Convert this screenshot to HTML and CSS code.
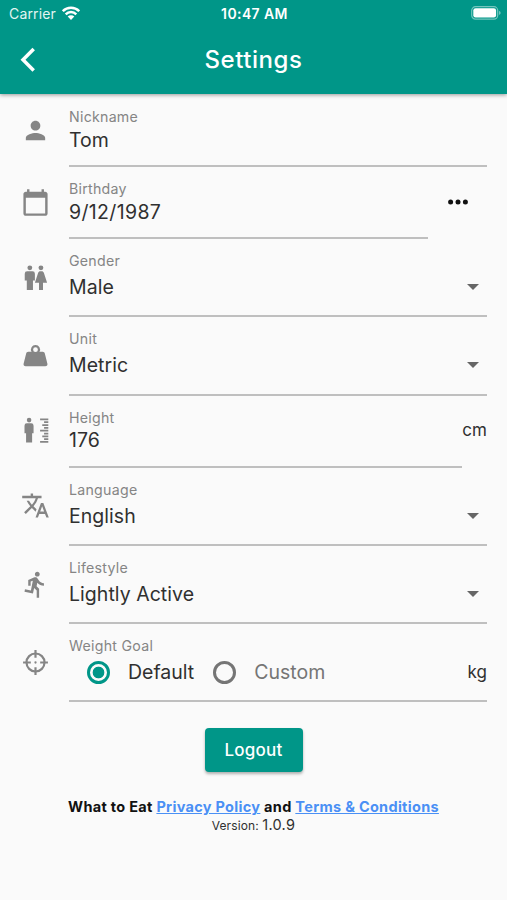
FILE: index.html
```html
<!DOCTYPE html>
<html lang="en">
<head>
<meta charset="utf-8">
<title>Settings</title>
<link rel="stylesheet" href="styles.css">
</head>
<body>
<header class="header">
  <div class="status">
    <div class="carrier"><span>Carrier</span>
      <svg class="wifi" viewBox="0 0 18 14"><g fill="none" stroke="currentColor" stroke-width="2.5"><path d="M.8 5.200a11.600 11.600 0 0 1 16.400 0"/><path d="M3.700 8.300a7.500 7.500 0 0 1 10.600 0"/></g><path d="M9 14 5.700 10.600a4.700 4.700 0 0 1 6.600 0z" fill="currentColor"/></svg>
    </div>
    <div class="clock">10:47 AM</div>
    <div class="power"><svg class="battery" viewBox="0 0 30 14"><rect x=".7" y=".7" width="26" height="12.400" rx="3.800" fill="none" stroke="#fff" stroke-opacity=".45" stroke-width="1.200"/><rect x="2.300" y="2.300" width="22.800" height="9.200" rx="2.300" fill="#fff"/><path d="M28.100 4.800q3 2.100 0 4.200z" fill="#fff" fill-opacity=".5"/></svg></div>
  </div>
  <div class="bar">
    <svg class="back" viewBox="0 0 16 26"><path d="M13.700 2 3 12.800 13.700 23.600" fill="none" stroke="currentColor" stroke-width="3.500"/></svg>
    <h1 class="title">Settings</h1>
    <span></span>
  </div>
</header>
<main class="list">
  <section class="row">
    <div class="lead"><svg class="icon" viewBox="0 0 24 24"><path d="M12 12c2.210 0 4-1.790 4-4s-1.790-4-4-4-4 1.790-4 4 1.790 4 4 4zm0 2c-2.670 0-8 1.340-8 4v2h16v-2c0-2.660-5.330-4-8-4z"/></svg></div>
    <div class="field"><label class="label">Nickname</label><div class="value">Tom</div></div>
  </section>
  <section class="row">
    <div class="lead"><svg class="icon" viewBox="0 0 24 24"><path d="M20 3h-1V1h-2v2H7V1H5v2H4c-1.100 0-2 .9-2 2v16c0 1.100.9 2 2 2h16c1.100 0 2-.9 2-2V5c0-1.100-.9-2-2-2zm0 18H4V8h16z"/></svg></div>
    <div class="field"><label class="label">Birthday</label><div class="value date">9/12/1987</div></div>
    <div class="more"><svg class="dots" viewBox="0 0 20 6"><circle cx="2.600" cy="3" r="2.500"/><circle cx="10" cy="3" r="2.500"/><circle cx="17.400" cy="3" r="2.500"/></svg></div>
  </section>
  <section class="row tall">
    <div class="lead"><svg class="icon low" viewBox="0 0 24 24"><circle cx="7.300" cy="3.200" r="2"/><circle cx="16.500" cy="3.200" r="2"/><path d="M5.100 6h4.400a2 2 0 0 1 2 2v5.600h-1.600v7.900H4.800v-7.900H3.100V8a2 2 0 0 1 2-2zM15.900 6h1.300c.8 0 1.400.5 1.700 1.300l2.700 8.200h-3.400v6h-3.300v-6h-3.400l2.700-8.200c.3-.8.900-1.300 1.700-1.300z"/></svg></div>
    <div class="field"><label class="label">Gender</label><div class="value">Male<i class="caret"></i></div></div>
  </section>
  <section class="row tall">
    <div class="lead"><svg class="icon low" viewBox="-2 -2 28 28"><path fill-rule="evenodd" d="M12 1a4.300 4.300 0 0 1 3.800 6.500H19c1 0 1.800.7 2 1.600l2.500 10c.3 1.200-.5 2.400-2 2.400h-19C1 21.500.2 20.300.5 19.100L3 9.100C3.200 8.200 4 7.500 5 7.500h3.200A4.300 4.300 0 0 1 12 1zm0 2.100a2.300 2.300 0 1 0 0 4.600 2.300 2.300 0 0 0 0-4.600z"/></svg></div>
    <div class="field"><label class="label">Unit</label><div class="value">Metric<i class="caret"></i></div></div>
  </section>
  <section class="row">
    <div class="lead"><svg class="icon" viewBox="0 0 24 24"><circle cx="6.700" cy="3.400" r="1.900"/><path d="M5 6h3.400a2 2 0 0 1 2 2v6.300H9.200V22h-5v-7.700H2.900V8A2 2 0 0 1 5 6z"/><path d="M15.800 2.800h6.800M19.100 5.100h3.500M17.600 7.500h5M19.100 9.800h3.500M15.800 12.200h6.800M19.100 14.500h3.500M17.600 16.900h5M19.100 19.200h3.500M15.800 21.400h6.800" fill="none" stroke="currentColor" stroke-width="1.450"/></svg></div>
    <div class="field"><label class="label">Height</label><div class="value">176</div></div>
    <div class="unit">cm</div>
  </section>
  <section class="row tall">
    <div class="lead"><svg class="icon" viewBox="0 0 24 24"><path d="M12.870 15.070l-2.540-2.510.03-.03c1.740-1.940 2.980-4.170 3.710-6.530H17V4h-7V2H8v2H1v1.990h11.170C11.500 7.920 10.440 9.750 9 11.350 8.070 10.320 7.300 9.190 6.690 8h-2c.73 1.630 1.730 3.170 2.980 4.560l-5.090 5.020L4 19l5-5 3.110 3.110.76-2.040zM18.500 10h-2L12 22h2l1.120-3h4.750L21 22h2l-4.500-12zm-2.620 7l1.620-4.330L19.120 17h-3.240z"/></svg></div>
    <div class="field"><label class="label">Language</label><div class="value">English<i class="caret"></i></div></div>
  </section>
  <section class="row tall">
    <div class="lead"><svg class="icon" viewBox="0 0 24 24"><path d="M13.490 5.480c1.100 0 2-.9 2-2s-.9-2-2-2-2 .9-2 2 .9 2 2 2zm-3.600 13.900l1-4.400 2.100 2v6h2v-7.500l-2.100-2 .6-3c1.300 1.500 3.300 2.500 5.500 2.500v-2c-1.900 0-3.500-1-4.300-2.400l-1-1.600c-.4-.6-1-1-1.700-1-.3 0-.5.1-.8.1l-5.200 2.200v4.700h2v-3.400l1.800-.7-1.600 8.100-4.900-1-.4 2z"/></svg></div>
    <div class="field"><label class="label">Lifestyle</label><div class="value">Lightly Active<i class="caret"></i></div></div>
  </section>
  <section class="row tall">
    <div class="lead"><svg class="icon" viewBox="-2 -2 28 28"><g fill="none" stroke="currentColor" stroke-width="2.100"><circle cx="12" cy="12" r="8.700"/><path d="M12 0v7.500M12 16.500V24M0 12h7.500M16.500 12H24"/></g><circle cx="12" cy="12" r="1.100"/></svg></div>
    <div class="field"><label class="label">Weight Goal</label>
      <div class="value goals"><i class="radio on"></i><span class="opt">Default</span><i class="radio"></i><span class="opt muted">Custom</span><span class="kg">kg</span></div></div>
  </section>
</main>
<div class="actions"><button class="logout">Logout</button></div>
<footer class="footer">
  <div class="legal">What to Eat <a class="link">Privacy Policy</a> and <a class="link">Terms &amp; Conditions</a></div>
  <div class="version">Version: <span class="number">1.0.9</span></div>
</footer>
</body>
</html>
```
FILE: styles.css
```css
* { box-sizing: border-box; }
body {
  margin: 0;
  min-height: 900px;
  background: #fafafa;
  color: #303030;
  font-family: Inter, "Liberation Sans", sans-serif;
}
svg { display: block; }
.header {
  height: 94px;
  background: #009688;
  color: #fff;
  box-shadow: 0 1px 4px rgba(0, 0, 0, .4);
}
.status {
  display: grid;
  grid-template-columns: 1fr auto 1fr;
  height: 27px;
  padding: 0 6px 0 9px;
  align-items: center;
  font-size: 14px;
}
.carrier { display: flex; align-items: center; gap: 6px; color: #e2f5f2; letter-spacing: .15px; }
.wifi { width: 18px; height: 14px; margin-top: -2px; color: #fff; }
.clock { font-weight: 600; font-size: 14px; letter-spacing: .4px; margin-left: -1px; }
.power { display: flex; justify-content: flex-end; }
.battery { width: 30px; height: 14px; margin-top: -1px; }
.bar {
  display: grid;
  grid-template-columns: 1fr auto 1fr;
  align-items: center;
  height: 66px;
  padding: 0 19px;
}
.back { width: 16px; height: 26px; margin-left: 1px; }
.title { margin: 0; font-size: 24px; font-weight: 500; line-height: 30px; letter-spacing: .55px; }
.list { padding: 1px 20px 0 0; }
.row { display: flex; height: 72px; }
.tall { height: 78.300px; }
.lead { width: 69px; display: flex; align-items: center; padding: 0 0 2px 20.500px; }
.icon { width: 29px; height: 29px; fill: #858585; color: #858585; }
.low { margin-top: 2px; }
.field {
  flex: 1;
  display: flex;
  flex-direction: column;
  padding-top: 13px;
  border-bottom: 2px solid #bfbfbf;
}
.label { font-size: 14.200px; line-height: 18px; letter-spacing: .25px; color: #858585; }
.value {
  display: flex;
  align-items: center;
  padding-top: .6px;
  font-size: 19.500px;
  line-height: 26px;
  letter-spacing: .04px;
}
.date { letter-spacing: .35px; }
.tall .value { padding-top: 4px; }
.caret {
  margin: 0 8px 0 auto;
  border: 6px solid transparent;
  border-top-color: #666;
  border-bottom: 0;
}
.more { width: 59px; display: flex; align-items: center; justify-content: center; padding-bottom: 2px; }
.dots { width: 20px; height: 6px; fill: #111; }
.unit { width: 25px; text-align: right; font-size: 17px; line-height: 69px; letter-spacing: .1px; }
.radio {
  width: 23px;
  height: 23px;
  border: 3px solid #757575;
  border-radius: 50%;
}
.on {
  margin-left: 18px;
  border-color: #009688;
  background: radial-gradient(circle, #009688 5.500px, transparent 6.200px);
}
.opt { margin: 0 19px 0 18px; letter-spacing: 0; }
.muted { color: #757575; }
.kg { margin-left: auto; font-size: 17px; }
.goals .muted { margin-right: 0; }
.actions { display: flex; justify-content: center; padding-top: 26px; }
.logout {
  width: 98px;
  height: 44px;
  border: 0;
  border-radius: 4px;
  background: #009688;
  color: #fff;
  font: 500 17px Inter, sans-serif;
  letter-spacing: .2px;
  box-shadow: 0 2px 3px rgba(0, 0, 0, .3);
}
.footer { padding-top: 26px; text-align: center; }
.legal { font-size: 14.500px; line-height: 18px; font-weight: 700; color: #111; letter-spacing: .3px; }
.link { color: #4a90f5; text-decoration: underline; }
.version { font-size: 12px; line-height: 17px; letter-spacing: .1px; }
.number { font-size: 14.500px; letter-spacing: .3px; }
```
